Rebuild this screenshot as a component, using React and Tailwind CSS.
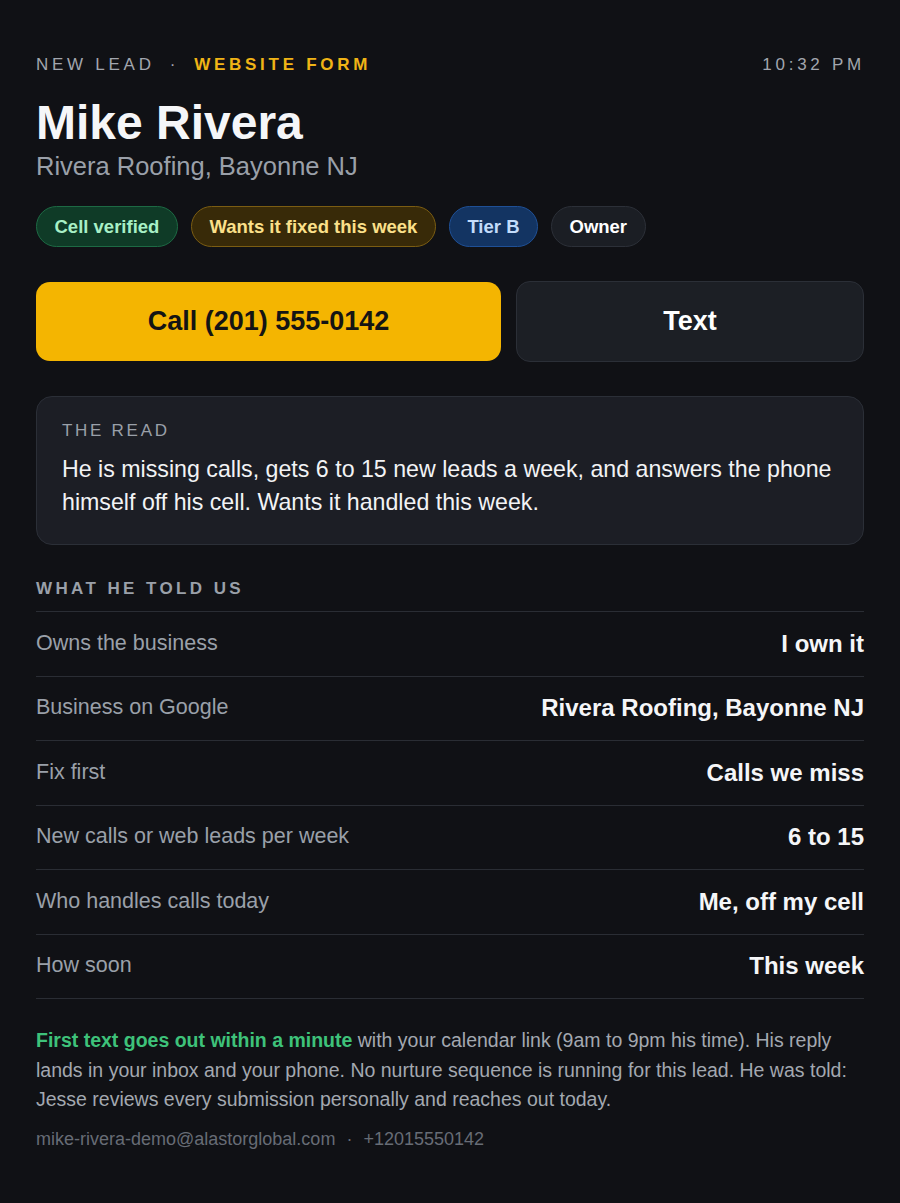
import React from "react";

const pills = [
  { label: "Cell verified", cls: "bg-[#0f3b27] border-[#1d6a44] text-[#a7f0c6]" },
  { label: "Wants it fixed this week", cls: "bg-[#382a08] border-[#7b5d12] text-[#fbe08a]" },
  { label: "Tier B", cls: "bg-[#133462] border-[#1f5096] text-[#c3dcfb]" },
  { label: "Owner", cls: "bg-[#1b1e24] border-[#2c3038] text-white" },
];

const rows = [
  ["Owns the business", "I own it"],
  ["Business on Google", "Rivera Roofing, Bayonne NJ"],
  ["Fix first", "Calls we miss"],
  ["New calls or web leads per week", "6 to 15"],
  ["Who handles calls today", "Me, off my cell"],
  ["How soon", "This week"],
];

export default function App() {
  return (
    <div className="min-h-[1203px] bg-[#101115] text-white font-['Liberation_Sans',Arial,sans-serif] px-9 pt-[55px] pb-10">
      {/* header */}
      <div className="flex items-center justify-between text-[17px] leading-5 tracking-[0.22em]">
        <div>
          <span className="text-[#a2a6ae]">NEW LEAD</span>
          <span className="text-[#a2a6ae] mx-[15px]">·</span>
          <span className="text-[#f0b416] font-bold">WEBSITE FORM</span>
        </div>
        <span className="text-[#a2a6ae] -mr-[1px]">10:32 PM</span>
      </div>

      <h1 className="mt-[22px] text-[48px] font-bold leading-[52px] text-[#f5f6f8]">Mike Rivera</h1>
      <p className="mt-[2px] text-[25.5px] leading-[30px] text-[#9aa0a9]">Rivera Roofing, Bayonne NJ</p>

      {/* pills */}
      <div className="mt-[25px] flex gap-[13px]">
        {pills.map((p) => (
          <span
            key={p.label}
            className={`h-[41px] px-[17.5px] flex items-center rounded-full border text-[18.5px] font-bold ${p.cls}`}
          >
            {p.label}
          </span>
        ))}
      </div>

      {/* actions */}
      <div className="mt-[35px] flex gap-[15px]">
        <button className="w-[465px] h-[79px] rounded-[14px] bg-[#f4b501] text-[#141414] text-[27px] font-bold">
          Call (201) 555-0142
        </button>
        <button className="flex-1 h-[81px] -mt-[1px] rounded-[14px] bg-[#1c1f25] border border-[#2b2f37] text-white text-[27px] font-bold">
          Text
        </button>
      </div>

      {/* the read */}
      <div className="mt-[34px] rounded-[16px] bg-[#1c1e25] border border-[#2b2f37] px-[25px] pt-[24px] pb-[25px]">
        <div className="text-[17px] leading-5 tracking-[0.16em] text-[#9aa0a9]">THE READ</div>
        <p className="mt-[12px] text-[23.2px] leading-[33px] text-[#f2f3f5]">
          He is missing calls, gets 6 to 15 new leads a week, and answers the phone himself off his cell. Wants it
          handled this week.
        </p>
      </div>

      {/* what he told us */}
      <div className="mt-[34px] text-[17px] leading-5 font-bold tracking-[0.2em] text-[#9aa0a9]">WHAT HE TOLD US</div>
      <div className="mt-[12px] border-t border-[#2a2d34]">
        {rows.map(([k, v]) => (
          <div key={k} className="h-[64.5px] flex items-center justify-between border-b border-[#2a2d34]">
            <span className="text-[21.5px] text-[#9aa0a9] -mt-[2px]">{k}</span>
            <span className="text-[24px] font-bold text-[#f5f6f8]">{v}</span>
          </div>
        ))}
      </div>

      {/* footer */}
      <p className="mt-[27px] text-[19.5px] leading-[29.5px] text-[#a3a8b0]">
        <span className="font-bold text-[#3ec27a]">First text goes out within a minute</span> with your calendar link
        (9am to 9pm his time). His reply lands in your inbox and your phone. No nurture sequence is running for this
        lead. He was told: Jesse reviews every submission personally and reaches out today.
      </p>
      <p className="mt-[12px] text-[18px] leading-6 text-[#676c75]">
        mike-rivera-demo@alastorglobal.com <span className="mx-[6px]">·</span> +12015550142
      </p>
    </div>
  );
}
